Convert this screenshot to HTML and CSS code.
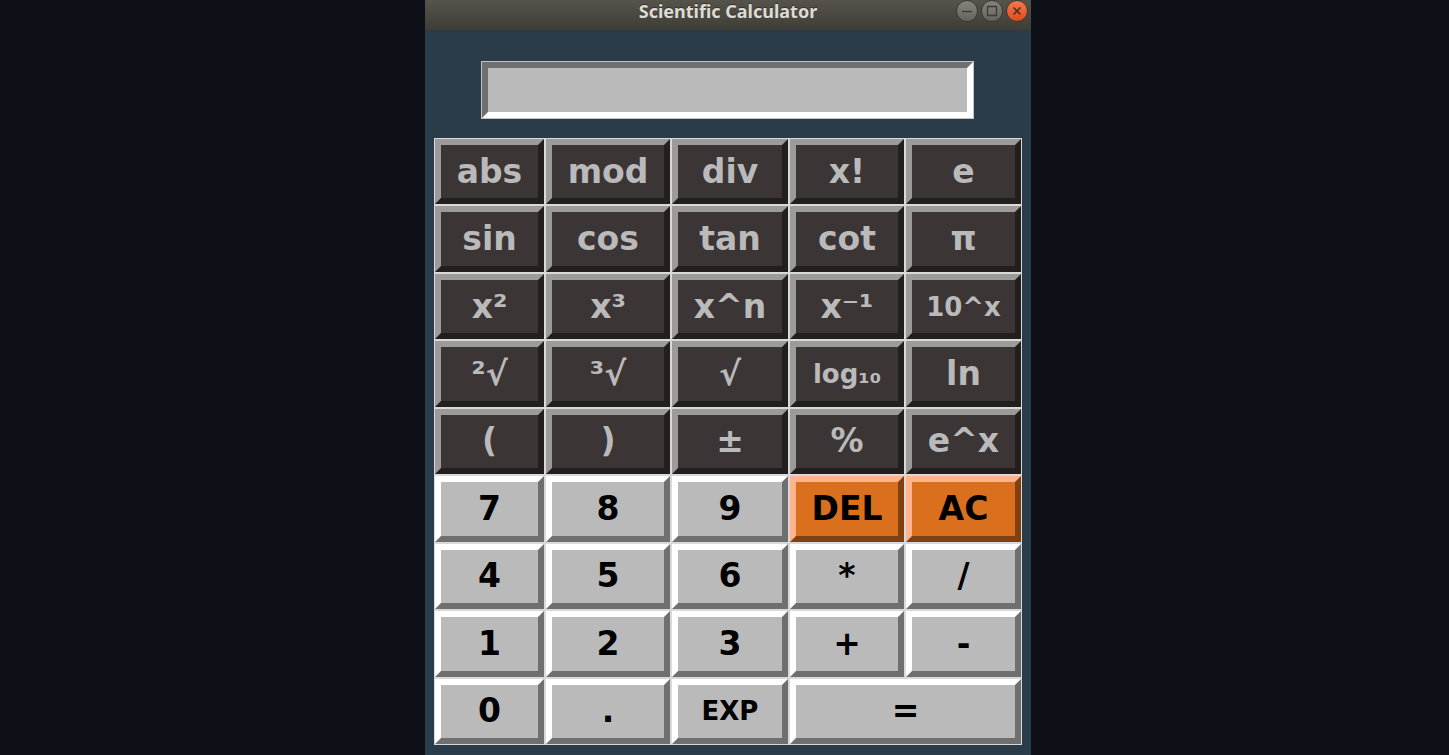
FILE: index.html
```html
<!DOCTYPE html>
<html lang="en">
  <head>
    <title>Scientific Calculator</title>
    <meta charset="utf-8" />
    <meta name="viewport" content="width=device-width, initial-scale=1.0" />
    <link rel="stylesheet" href="styles.css">
  </head>
  <body>
    <main class="window">
      <header class="titlebar">
        <h1>Scientific Calculator</h1>
        <div class="controls">
          <button class="control" type="button" aria-label="Minimize">
            <svg viewBox="0 0 20 20"><path d="M5 10.5h10" /></svg>
          </button>
          <button class="control" type="button" aria-label="Maximize">
            <svg viewBox="0 0 20 20"><path d="M5.5 5.5h9v9h-9z" /></svg>
          </button>
          <button class="control close" type="button" aria-label="Close">
            <svg viewBox="0 0 20 20"><path d="M6.5 6.5l7 7M13.5 6.5l-7 7" /></svg>
          </button>
        </div>
      </header>
      <input class="display" type="text" aria-label="Display" />
      <div class="keys">
        <button class="fn">abs</button>
        <button class="fn">mod</button>
        <button class="fn">div</button>
        <button class="fn">x!</button>
        <button class="fn">e</button>

        <button class="fn">sin</button>
        <button class="fn">cos</button>
        <button class="fn">tan</button>
        <button class="fn">cot</button>
        <button class="fn">π</button>

        <button class="fn">x²</button>
        <button class="fn">x³</button>
        <button class="fn">x^n</button>
        <button class="fn">x⁻¹</button>
        <button class="fn small">10^x</button>

        <button class="fn">²√</button>
        <button class="fn">³√</button>
        <button class="fn">√</button>
        <button class="fn small">log₁₀</button>
        <button class="fn">ln</button>

        <button class="fn">(</button>
        <button class="fn">)</button>
        <button class="fn">±</button>
        <button class="fn">%</button>
        <button class="fn">e^x</button>

        <button>7</button>
        <button>8</button>
        <button>9</button>
        <button class="clear">DEL</button>
        <button class="clear">AC</button>

        <button>4</button>
        <button>5</button>
        <button>6</button>
        <button>*</button>
        <button>/</button>

        <button>1</button>
        <button>2</button>
        <button>3</button>
        <button>+</button>
        <button>-</button>

        <button>0</button>
        <button>.</button>
        <button class="small">EXP</button>
        <button class="equals">=</button>
      </div>
    </main>
  </body>
</html>
```

FILE: styles.css
```css
* {
  box-sizing: border-box;
}
body {
  background-color: #0d1017;
  margin: 0;
  padding-left: 7px;
}
button {
  margin: 0;
  padding: 0;
}

.window {
  display: flex;
  flex-direction: column;
  max-width: 606px;
  min-height: 100vh;
  margin: 0 auto;
  padding-bottom: 10px;
  background-color: #2a3c4a;
}

/* title bar */
.titlebar {
  display: grid;
  grid-template-columns: 1fr auto 1fr;
  align-items: start;
  height: 30px;
  padding: 0 3px;
  background: linear-gradient(#56534b, #3e3d37);
}
.titlebar h1 {
  grid-column: 2;
  margin: 0;
  color: #dfdbd2;
  font: bold 18px / 22px "Noto Sans", sans-serif;
  text-shadow: 0 -1px #33322d;
}
.controls {
  display: flex;
  justify-content: flex-end;
  gap: 3px;
}
.control {
  width: 22px;
  height: 22px;
  border: 1px solid #3b3a35;
  border-radius: 50%;
  background: linear-gradient(#85837b, #66645e);
}
.control svg {
  display: block;
  width: 20px;
  height: 20px;
  fill: none;
  stroke: #3c3b37;
  stroke-width: 1.3;
}
.close {
  background: linear-gradient(#f5784f, #de4c1c);
}
.close svg {
  stroke: #55301c;
  stroke-width: 1.7;
}

.display {
  height: 58px;
  margin: 31px 57px 19px 56px;
  padding: 0 6px;
  border: 7px solid;
  border-color: #6f6f6f #fff #fff #6f6f6f;
  border-radius: 0;
  outline: 1px solid #c0c4c6;
  outline-offset: -1px;
  background-color: #bababa;
  font: bold 33px "DejaVu Sans", sans-serif;
}

/* the grid background shows through as the lines between keys */
.keys {
  display: grid;
  flex: 1;
  grid-template-columns: 109fr 124fr 116fr 114fr 115fr;
  grid-auto-rows: 1fr;
  gap: 2px;
  margin: 0 9px;
  padding: 1px;
  background-color: #d9d9d9;
}
.keys button {
  min-width: 0;
  border: 6px solid;
  border-color: #fff #6f6f6f #6f6f6f #fff;
  background-color: #bababa;
  color: #000;
  font: bold 33px / 40px "DejaVu Sans", sans-serif;
}
.keys .fn {
  border-color: #9c9b99 #231f1e #231f1e #9c9b99;
  background-color: #3c3535;
  color: #bababa;
}
.keys .clear {
  border-color: #ffb48e #804010 #804010 #ffb48e;
  background-color: #da701e;
}
.keys .small {
  font-size: 26px;
}
.keys .equals {
  grid-column: span 2;
}
```
